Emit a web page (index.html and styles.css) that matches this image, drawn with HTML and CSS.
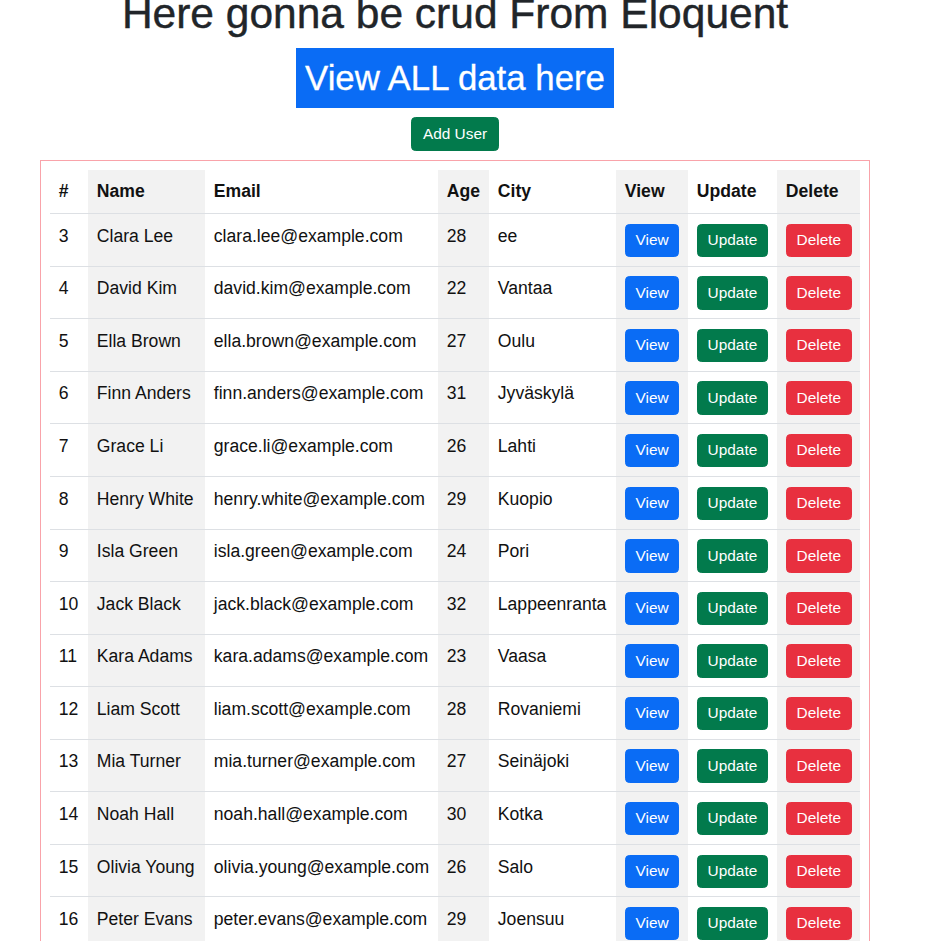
FILE: index.html
```html
<!DOCTYPE html>
<html lang="en">
<head>
<meta charset="utf-8">
<title>Crud</title>
<link rel="stylesheet" href="styles.css">
</head>
<body>
<div class="page">
  <h1 class="title">Here gonna be crud From Eloquent</h1>
  <h2 class="banner">View ALL data here</h2>
  <div class="actions"><button class="btn btn-success">Add User</button></div>
  <div class="card">
    <table class="table">
      <colgroup>
        <col class="c-id"><col class="c-name shade"><col class="c-email"><col class="c-age shade"><col class="c-city"><col class="c-view shade"><col class="c-upd"><col class="c-del shade">
      </colgroup>
      <thead>
        <tr><th>#</th><th>Name</th><th>Email</th><th>Age</th><th>City</th><th>View</th><th>Update</th><th>Delete</th></tr>
      </thead>
      <tbody>
        <tr><td>3</td><td>Clara Lee</td><td>clara.lee@example.com</td><td>28</td><td>ee</td><td><button class="btn btn-primary">View</button></td><td><button class="btn btn-success">Update</button></td><td><button class="btn btn-danger">Delete</button></td></tr>
        <tr><td>4</td><td>David Kim</td><td>david.kim@example.com</td><td>22</td><td>Vantaa</td><td><button class="btn btn-primary">View</button></td><td><button class="btn btn-success">Update</button></td><td><button class="btn btn-danger">Delete</button></td></tr>
        <tr><td>5</td><td>Ella Brown</td><td>ella.brown@example.com</td><td>27</td><td>Oulu</td><td><button class="btn btn-primary">View</button></td><td><button class="btn btn-success">Update</button></td><td><button class="btn btn-danger">Delete</button></td></tr>
        <tr><td>6</td><td>Finn Anders</td><td>finn.anders@example.com</td><td>31</td><td>Jyväskylä</td><td><button class="btn btn-primary">View</button></td><td><button class="btn btn-success">Update</button></td><td><button class="btn btn-danger">Delete</button></td></tr>
        <tr><td>7</td><td>Grace Li</td><td>grace.li@example.com</td><td>26</td><td>Lahti</td><td><button class="btn btn-primary">View</button></td><td><button class="btn btn-success">Update</button></td><td><button class="btn btn-danger">Delete</button></td></tr>
        <tr><td>8</td><td>Henry White</td><td>henry.white@example.com</td><td>29</td><td>Kuopio</td><td><button class="btn btn-primary">View</button></td><td><button class="btn btn-success">Update</button></td><td><button class="btn btn-danger">Delete</button></td></tr>
        <tr><td>9</td><td>Isla Green</td><td>isla.green@example.com</td><td>24</td><td>Pori</td><td><button class="btn btn-primary">View</button></td><td><button class="btn btn-success">Update</button></td><td><button class="btn btn-danger">Delete</button></td></tr>
        <tr><td>10</td><td>Jack Black</td><td>jack.black@example.com</td><td>32</td><td>Lappeenranta</td><td><button class="btn btn-primary">View</button></td><td><button class="btn btn-success">Update</button></td><td><button class="btn btn-danger">Delete</button></td></tr>
        <tr><td>11</td><td>Kara Adams</td><td>kara.adams@example.com</td><td>23</td><td>Vaasa</td><td><button class="btn btn-primary">View</button></td><td><button class="btn btn-success">Update</button></td><td><button class="btn btn-danger">Delete</button></td></tr>
        <tr><td>12</td><td>Liam Scott</td><td>liam.scott@example.com</td><td>28</td><td>Rovaniemi</td><td><button class="btn btn-primary">View</button></td><td><button class="btn btn-success">Update</button></td><td><button class="btn btn-danger">Delete</button></td></tr>
        <tr><td>13</td><td>Mia Turner</td><td>mia.turner@example.com</td><td>27</td><td>Seinäjoki</td><td><button class="btn btn-primary">View</button></td><td><button class="btn btn-success">Update</button></td><td><button class="btn btn-danger">Delete</button></td></tr>
        <tr><td>14</td><td>Noah Hall</td><td>noah.hall@example.com</td><td>30</td><td>Kotka</td><td><button class="btn btn-primary">View</button></td><td><button class="btn btn-success">Update</button></td><td><button class="btn btn-danger">Delete</button></td></tr>
        <tr><td>15</td><td>Olivia Young</td><td>olivia.young@example.com</td><td>26</td><td>Salo</td><td><button class="btn btn-primary">View</button></td><td><button class="btn btn-success">Update</button></td><td><button class="btn btn-danger">Delete</button></td></tr>
        <tr><td>16</td><td>Peter Evans</td><td>peter.evans@example.com</td><td>29</td><td>Joensuu</td><td><button class="btn btn-primary">View</button></td><td><button class="btn btn-success">Update</button></td><td><button class="btn btn-danger">Delete</button></td></tr>
      </tbody>
    </table>
  </div>
</div>
</body>
</html>
```

FILE: styles.css
```css
html, body {
  margin: 0;
  padding: 0;
  background: #ffffff;
}
body {
  font-family: "Liberation Sans", Arial, sans-serif;
  color: #212529;
  overflow: hidden;
}
.page {
  width: 910px;
  text-align: center;
}
.title {
  font-size: 42.5px;
  font-weight: 400;
  line-height: 51px;
  margin: -11.8px 0 8.8px;
  color: #212529;
  -webkit-text-stroke: 0.4px #212529;
}
.banner {
  display: inline-block;
  margin: 0 0 8.8px;
  padding: 8.8px;
  font-size: 34.8px;
  font-weight: 400;
  line-height: 42.2px;
  color: #ffffff;
  background: #0a6cf5;
  -webkit-text-stroke: 0.3px #ffffff;
}
.actions {
  margin-bottom: 8.8px;
}
.btn {
  display: inline-block;
  font-family: inherit;
  font-size: 15.4px;
  line-height: 22.6px;
  font-weight: 400;
  padding: 4.4px 9.8px;
  border: 1.1px solid transparent;
  border-radius: 4.4px;
  color: #ffffff;
  cursor: pointer;
  vertical-align: top;
}
.btn-primary { background: #0a6cf5; border-color: #0a6cf5; }
.btn-success { background: #027a4c; border-color: #027a4c; }
.btn-danger { background: #e8303f; border-color: #e8303f; }
.actions .btn { padding: 4.4px 11px; line-height: 24px; }
.card {
  margin: 0 40px;
  border: 1px solid #f9a3aa;
  padding: 9px;
  text-align: left;
}
.table {
  width: 810px;
  table-layout: fixed;
  border-collapse: collapse;
  color: #111111;
  font-size: 17.6px;
  line-height: 26.4px;
}
.c-id { width: 38px; }
.c-name { width: 117px; }
.c-email { width: 233px; }
.c-age { width: 51px; }
.c-city { width: 127px; }
.c-view { width: 72px; }
.c-upd { width: 89px; }
.c-del { width: 83px; }
.shade { background: #f2f2f2; }
.table th {
  font-weight: 700;
  text-align: left;
  padding: 8.3px 8.8px 8.3px;
  border-bottom: 1px solid #dde0e4;
  white-space: nowrap;
}
.table td {
  padding: 8.6px 8.8px;
  vertical-align: top;
  border-bottom: 1px solid #dde0e4;
  white-space: nowrap;
}
.table td .btn {
  margin-top: 1px;
}
```
